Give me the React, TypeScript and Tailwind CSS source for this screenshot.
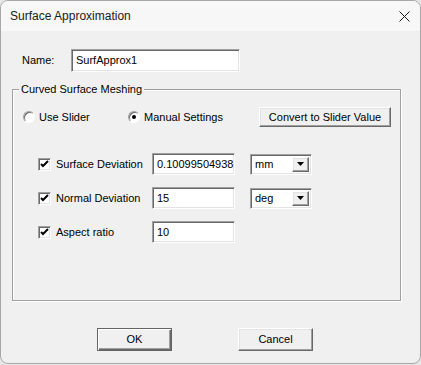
import React from "react";

const sunken =
  "bg-white border border-t-[#a0a0a0] border-l-[#a0a0a0] border-b-white border-r-white shadow-[inset_1px_1px_0_#696969,inset_-1px_-1px_0_#e3e3e3]";
const raised =
  "bg-[#f0f0f0] border border-t-white border-l-white border-b-[#696969] border-r-[#696969] shadow-[inset_-1px_-1px_0_#a0a0a0,inset_1px_1px_0_#e3e3e3]";

function Check() {
  return (
    <span className={`w-[13px] h-[13px] shrink-0 flex items-center justify-center ${sunken}`}>
      <svg width="9" height="9" viewBox="0 0 9 9">
        <path d="M1 4 L3 6 L8 1" fill="none" stroke="#000" strokeWidth="2" />
      </svg>
    </span>
  );
}

function Radio({ on }: { on?: boolean }) {
  return (
    <span className="w-[12px] h-[12px] shrink-0 rounded-full bg-white border border-t-[#a0a0a0] border-l-[#a0a0a0] border-b-white border-r-white shadow-[inset_1px_1px_0_#696969] flex items-center justify-center">
      {on && <span className="w-[4px] h-[4px] rounded-full bg-black" />}
    </span>
  );
}

function Combo({ value }: { value: string }) {
  return (
    <div className={`w-[62px] h-[21px] flex items-stretch ${sunken}`}>
      <span className="flex-1 pl-[4px] flex items-center">{value}</span>
      <span className={`w-[17px] my-[2px] mr-[2px] flex items-center justify-center ${raised}`}>
        <svg width="7" height="4" viewBox="0 0 7 4">
          <path d="M0 0 H7 L3.5 4 Z" fill="#000" />
        </svg>
      </span>
    </div>
  );
}

function Row({ label, value, unit }: { label: string; value: string; unit?: string }) {
  return (
    <div className="flex items-center h-[22px]">
      <div className="w-[139px] pl-[25px] flex items-center gap-[5px] whitespace-nowrap">
        <Check />
        <span>{label}</span>
      </div>
      <div className={`w-[83px] h-[22px] pl-[4px] flex items-center ${sunken}`}>{value}</div>
      {unit && (
        <div className="ml-[15px]">
          <Combo value={unit} />
        </div>
      )}
    </div>
  );
}

export default function App() {
  return (
    <div
      className="w-[421px] h-[365px] bg-[#e6e6e6] text-[11px] text-black"
      style={{ fontFamily: '"Liberation Sans", Arial, sans-serif' }}
    >
      <div className="w-[421px] h-[364px] bg-[#f0f0f0] border border-[#a8a8a8] rounded-[8px] overflow-hidden flex flex-col">
        <div className="h-[30px] bg-[#f7f7f7] flex items-center justify-between pl-[9px] pr-[10px]">
          <span className="text-[12px] text-[#1a1a1a]">Surface Approximation</span>
          <svg width="11" height="11" viewBox="0 0 11 11">
            <path d="M0.5 0.5 L10.5 10.5 M10.5 0.5 L0.5 10.5" stroke="#1a1a1a" strokeWidth="1" />
          </svg>
        </div>

        <div className="flex-1 px-[11px]">
          <div className="mt-[18px] flex items-center h-[23px]">
            <span className="w-[59px] pl-[10px]">Name:</span>
            <div className={`w-[169px] h-[23px] pl-[4px] flex items-center ${sunken}`}>SurfApprox1</div>
          </div>

          <fieldset className="mt-[10px] w-[389px] h-[219px] border border-[#a0a0a0] shadow-[1px_1px_0_#fff,inset_1px_1px_0_#fff]">
            <legend className="ml-[6px] px-[2px] leading-[14px]">Curved Surface Meshing</legend>
            <div className="mt-[11px] flex items-center h-[20px] pl-[10px]">
              <div className="w-[105px] flex items-center gap-[4px]">
                <Radio />
                <span>Use Slider</span>
              </div>
              <div className="w-[131px] flex items-center gap-[4px]">
                <Radio on />
                <span>Manual Settings</span>
              </div>
              <button className={`w-[132px] h-[20px] ${raised}`}>Convert to Slider Value</button>
            </div>

            <div className="mt-[26px] flex flex-col gap-[12px]">
              <Row label="Surface Deviation" value="0.10099504938" unit="mm" />
              <Row label="Normal Deviation" value="15" unit="deg" />
              <Row label="Aspect ratio" value="10" />
            </div>
          </fieldset>

          <div className="mt-[27px] flex">
            <button className="ml-[85px] w-[75px] h-[23px] bg-[#f0f0f0] border border-[#646464] shadow-[inset_1px_1px_0_#fff,inset_-1px_-1px_0_#696969,inset_-2px_-2px_0_#a0a0a0]">
              OK
            </button>
            <button className={`ml-[66px] w-[75px] h-[23px] ${raised}`}>Cancel</button>
          </div>
        </div>
      </div>
    </div>
  );
}
